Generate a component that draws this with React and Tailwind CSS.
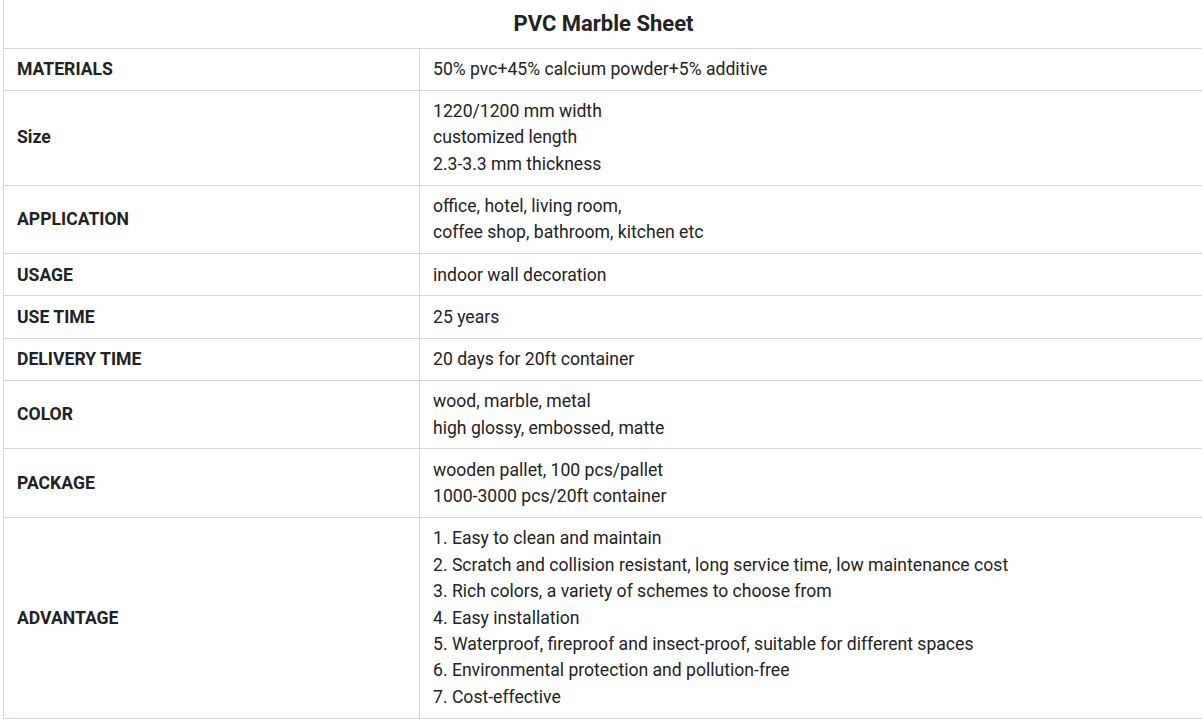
import React from 'react';

const rows = [
  { label: 'MATERIALS', lines: ['50% pvc+45% calcium powder+5% additive'] },
  { label: 'Size', lines: ['1220/1200 mm width', 'customized length', '2.3-3.3 mm thickness'] },
  { label: 'APPLICATION', lines: ['office, hotel, living room,', 'coffee shop, bathroom, kitchen etc'] },
  { label: 'USAGE', lines: ['indoor wall decoration'] },
  { label: 'USE TIME', lines: ['25 years'] },
  { label: 'DELIVERY TIME', lines: ['20 days for 20ft container'] },
  { label: 'COLOR', lines: ['wood, marble, metal', 'high glossy, embossed, matte'] },
  { label: 'PACKAGE', lines: ['wooden pallet, 100 pcs/pallet', '1000-3000 pcs/20ft container'] },
  {
    label: 'ADVANTAGE',
    lines: [
      '1. Easy to clean and maintain',
      '2. Scratch and collision resistant, long service time, low maintenance cost',
      '3. Rich colors, a variety of schemes to choose from',
      '4. Easy installation',
      '5. Waterproof, fireproof and insect-proof, suitable for different spaces',
      '6. Environmental protection and pollution-free',
      '7. Cost-effective'
    ]
  }
];

const App = () => {
  return (
    <div className="bg-white min-h-screen pl-[3px] font-['Roboto',sans-serif] text-[#222222]">
      <table className="w-[1201px] border-collapse text-[17.6px] leading-[26.4px]">
        <tbody>
          <tr>
            <td
              colSpan={2}
              className="h-[48px] border-l border-r border-[#d3d6dd] text-center text-[22px] font-bold align-middle"
            >
              PVC Marble Sheet
            </td>
          </tr>
          {rows.map((row) => (
            <tr key={row.label}>
              <td className="w-[416px] border border-[#d3d6dd] px-[13px] py-[7.4px] font-bold align-middle">
                {row.label}
              </td>
              <td className="border border-[#d3d6dd] px-[13px] py-[7.4px] align-middle">
                {row.lines.map((line) => (
                  <div key={line}>{line}</div>
                ))}
              </td>
            </tr>
          ))}
        </tbody>
      </table>
    </div>
  );
};

export default App;
